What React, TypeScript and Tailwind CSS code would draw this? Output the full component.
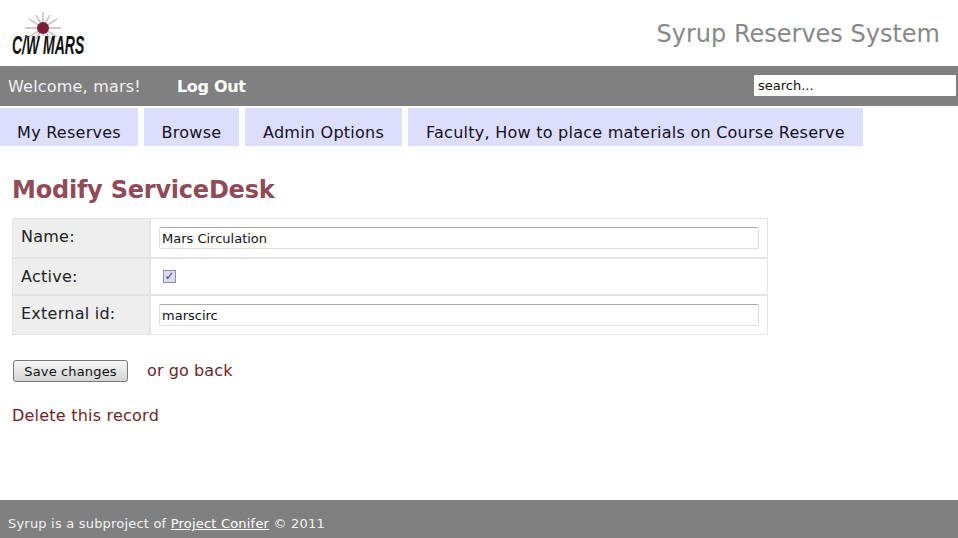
const tabs = [
  { label: "My Reserves", width: "w-[138px]" },
  { label: "Browse", width: "w-[95px]" },
  { label: "Admin Options", width: "w-[157px]" },
  { label: "Faculty, How to place materials on Course Reserve", width: "w-[455px]" },
];

function Logo() {
  return (
    <svg width="80" height="50" viewBox="0 0 80 50" className="block">
      <g stroke="#c4b6b8" strokeWidth="1.4">
        <line x1="32" y1="0" x2="32" y2="24" />
        <line x1="14" y1="16" x2="50" y2="16" />
        <line x1="18" y1="7" x2="46" y2="25" />
        <line x1="46" y1="7" x2="18" y2="25" />
        <line x1="25" y1="3" x2="39" y2="27" />
        <line x1="39" y1="3" x2="25" y2="27" />
      </g>
      <circle cx="32" cy="16" r="6" fill="#7a1f35" />
      <text
        transform="translate(1 42) scale(1 1.85)"
        fontFamily="'Liberation Sans', sans-serif"
        fontSize="14"
        fontStyle="italic"
        fontWeight="700"
        fill="#111111"
      >
        C/W MARS
      </text>
    </svg>
  );
}

function Row({ label, height, children }: { label: string; height: string; children: React.ReactNode }) {
  return (
    <div className={`flex border border-[#e4e4e4] ${height}`}>
      <div className="w-[138px] shrink-0 bg-[#eeeeee] border-r-2 border-[#e4e4e4] pl-2 pt-[8px] text-[16px] tracking-[0.25px] leading-[20px] text-[#222222]">
        {label}
      </div>
      <div className="flex-1 pl-2 pr-2 pt-2">{children}</div>
    </div>
  );
}

function TextField({ value }: { value: string }) {
  return (
    <input
      readOnly
      value={value}
      className="block w-full h-[22px] border border-[#dddddd] border-t-[#aaaaaa] rounded-[2px] bg-white px-[2px] text-[13px] text-[#111111] outline-none"
    />
  );
}

export default function App() {
  return (
    <div className="w-[958px] h-[538px] bg-white flex flex-col overflow-hidden font-['Verdana','DejaVu_Sans',sans-serif]">
      <header className="h-[66px] flex justify-between pl-[11px] pr-[18px] pt-[12px]">
        <Logo />
        <div className="text-[24px] leading-[30px] pt-[7px] text-[#888888]">Syrup Reserves System</div>
      </header>

      <div className="h-[40px] bg-[#808080] flex items-center pl-[8px] pr-[2px] text-white text-[16px]">
        <span className="mt-[2px] tracking-[0.2px] text-[#f2f2f2]">Welcome, mars!</span>
        <a className="ml-[36px] mt-[2px] font-bold tracking-[-0.3px]">Log Out</a>
        <input
          readOnly
          value="search..."
          className="ml-auto -mt-[2px] w-[202px] h-[21px] bg-white rounded-[1px] px-[4px] text-[13px] text-[#111111] outline-none"
        />
      </div>

      <nav className="flex gap-[6px] mt-[2px]">
        {tabs.map((tab) => (
          <div
            key={tab.label}
            className={`${tab.width} h-[38px] bg-[#ddddff] flex items-end justify-center pb-[2px] text-[16px] tracking-[0.25px] leading-[22px] text-[#111122]`}
          >
            {tab.label}
          </div>
        ))}
      </nav>

      <main className="flex-1 pl-[12px]">
        <h1 className="mt-[28px] text-[24px] tracking-[-0.22px] leading-[32px] font-bold text-[#8f4b57]">Modify ServiceDesk</h1>

        <div className="mt-[12px] w-[756px]">
          <Row label="Name:" height="h-[40px]">
            <TextField value="Mars Circulation" />
          </Row>
          <Row label="Active:" height="h-[37px]">
            <span className="mt-[3px] ml-[4px] block w-[13px] h-[13px] border border-[#8f8f9d] bg-[#d8dcf0] text-[#39417f] text-[12px] leading-[11px] text-center font-bold">
              ✓
            </span>
          </Row>
          <Row label="External id:" height="h-[40px]">
            <TextField value="marscirc" />
          </Row>
        </div>

        <div className="mt-[25px] flex items-start">
          <button className="w-[115px] h-[22px] ml-[1px] pt-[1px] rounded-[3px] border border-[#777777] bg-gradient-to-b from-[#f6f6f6] to-[#d4d4d4] text-[13px] tracking-[0.15px] leading-[18px] text-[#111111]">
            Save changes
          </button>
          <a className="ml-[19px] -mt-[1px] text-[16px] tracking-[0.1px] text-[#6e1f2a]">or go back</a>
        </div>

        <a className="block mt-[23px] text-[16px] tracking-[0.22px] leading-[20px] text-[#6e1f2a]">Delete this record</a>
      </main>

      <footer className="h-[38px] bg-[#808080] flex items-center pl-[8px] pt-[10px] text-[13px] tracking-[0.2px] text-[#f2f2f2]">
        <span>
          Syrup is a subproject of <a className="underline text-white">Project Conifer</a> © 2011
        </span>
      </footer>
    </div>
  );
}
